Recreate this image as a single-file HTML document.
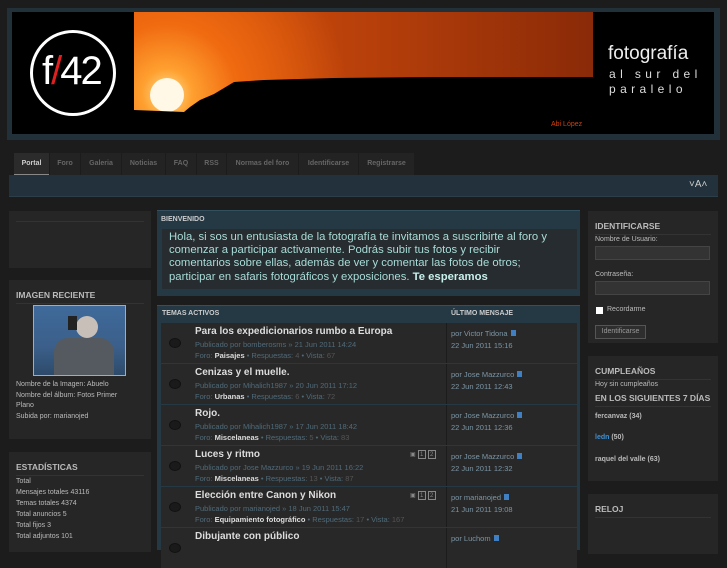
<!DOCTYPE html>
<html><head><meta charset="utf-8"><style>
*{margin:0;padding:0;box-sizing:border-box}
body{width:727px;height:545px;overflow:hidden;background:#1c1c1c;font-family:"Liberation Sans",sans-serif;color:#aaa;position:relative}
.a{position:absolute}
.box{position:absolute;background:#262626}
.bh{position:absolute;left:7px;right:7px;top:10px;height:14px;border-bottom:1px solid #333;font-size:8.5px;font-weight:bold;color:#bbb}
.tab{position:absolute;top:153px;height:22px;background:#232323;color:#666;font-size:7px;font-weight:bold;line-height:22px;text-align:center}
.sm{font-size:7px;color:#bbb;line-height:10.5px}
.row{position:absolute;left:161px;width:416px;height:40px;background:#282828}
.row .l{position:absolute;left:0;top:0;width:286px;height:40px;border-right:1px solid #1c1c1c}
.row .t{position:absolute;left:34px;top:3px;font-size:10px;font-weight:bold;color:#ddd}
.row .p{position:absolute;left:34px;top:17px;font-size:7.5px;color:#4f6b7a}
.row .f{position:absolute;left:34px;top:28px;font-size:7.5px;color:#4f6b7a}
.row .f b{color:#ddd}.row .f i{font-style:normal;color:#555}
.row .c{position:absolute;left:8px;top:15px;width:12px;height:10px;border-radius:50%;background:#1a1a1a;border:1px solid #111}
.row .r{position:absolute;left:290px;top:5px;font-size:7.5px;color:#7b96a6;line-height:11.5px}
.ic{display:inline-block;width:5px;height:6px;background:#3f7fc2;margin-left:3px}
.pg{position:absolute;top:4px;font-size:6px;color:#888}
.pg span{display:inline-block;width:8px;height:9px;border:1px solid #888;text-align:center;line-height:8px;margin-left:2px}
</style></head><body>
<div class="a" style="left:7px;top:8px;width:713px;height:132px;background:#22303a"></div>
<div class="a" style="left:12px;top:12px;width:702px;height:122px;background:#000"></div>
<div class="a" style="left:134px;top:12px;width:459px;height:121px;background:linear-gradient(90deg,#d5520c 0%,#b8400a 50%,#8a2a08 100%);overflow:hidden">
<div class="a" style="left:0;top:0;width:459px;height:121px;background:radial-gradient(circle at 33px 82px,#ffe090 0,#ffa030 25px,#f06a10 70px,rgba(220,80,10,0) 180px)"></div>
<div class="a" style="left:16px;top:66px;width:34px;height:34px;border-radius:50%;background:#fff8e6"></div>
<svg class="a" style="left:0;top:0" width="459" height="121"><path d="M0 98 L50 100 L56 95 L66 88 L80 82 L100 70 L130 68 L200 66 L300 65 L459 65 L459 121 L0 121Z" fill="#000"/></svg>
<div class="a" style="left:417px;top:109px;font-size:7px;color:#d0400a">Abi López</div>
</div>
<div class="a" style="left:30px;top:30px;width:86px;height:86px;border:3px solid #fff;border-radius:50%"></div>
<div class="a" style="left:42px;top:50px;font-size:40px;color:#fff;letter-spacing:-2px;font-family:'Liberation Sans Narrow','Liberation Sans',sans-serif;line-height:42px">f<span style="color:#e02020">/</span>42</div>
<div class="a" style="left:608px;top:44px;font-size:19px;color:#eee;line-height:20px">fotografía</div>
<div class="a" style="left:609px;top:67px;font-size:12px;color:#ddd;letter-spacing:4.4px;line-height:15px">al sur del<br>paralelo</div>

<div class="tab" style="left:14px;width:35px;background:#2b2b2b;color:#ccc;border-bottom:1px solid #888">Portal</div>
<div class="tab" style="left:50px;width:30px">Foro</div>
<div class="tab" style="left:81px;width:40px">Galeria</div>
<div class="tab" style="left:122px;width:43px">Noticias</div>
<div class="tab" style="left:166px;width:30px">FAQ</div>
<div class="tab" style="left:197px;width:29px">RSS</div>
<div class="tab" style="left:227px;width:71px">Normas del foro</div>
<div class="tab" style="left:299px;width:59px">Identificarse</div>
<div class="tab" style="left:359px;width:55px">Registrarse</div>
<div class="a" style="left:9px;top:175px;width:709px;height:22px;background:#22313b;border-bottom:1px solid #2c3e48"></div>
<div class="a" style="left:689px;top:179px;font-size:10px;color:#ccc">˅A˄</div>

<div class="box" style="left:9px;top:211px;width:142px;height:57px"><div class="a" style="left:7px;top:10px;width:128px;border-bottom:1px solid #333"></div></div>
<div class="box" style="left:9px;top:280px;width:142px;height:159px">
<div class="bh">IMAGEN RECIENTE</div>
<div class="a" style="left:24px;top:25px;width:93px;height:71px;background:#aaa;padding:1px"><div style="width:91px;height:69px;background:linear-gradient(180deg,#3f6a9a,#3b5f8a 60%,#2d4a6a);position:relative">
<div class="a" style="left:42px;top:10px;width:22px;height:22px;border-radius:50%;background:#c8c0b8"></div>
<div class="a" style="left:20px;top:32px;width:60px;height:37px;background:#555a60;border-radius:14px 14px 0 0"></div>
<div class="a" style="left:34px;top:10px;width:9px;height:14px;background:#222"></div></div></div>
<div class="a sm" style="left:7px;top:100px">Nombre de la Imagen: Abuelo<br>Nombre del álbum: Fotos Primer<br>Plano<br>Subida por: marianojed</div>
</div>
<div class="box" style="left:9px;top:452px;width:142px;height:100px">
<div class="bh">ESTADÍSTICAS</div>
<div class="a sm" style="left:7px;top:24px;line-height:11px">Total<br>Mensajes totales 43116<br>Temas totales 4374<br>Total anuncios 5<br>Total fijos 3<br>Total adjuntos 101</div>
</div>

<div class="a" style="left:157px;top:210px;width:423px;height:86px;background:#253945;border-top:1px solid #34505e"></div>
<div class="a" style="left:161px;top:216px;font-size:7px;font-weight:bold;color:#ccc">BIENVENIDO</div>
<div class="a" style="left:162px;top:229px;width:415px;height:60px;background:#262c2f"></div>
<div class="a" style="left:169px;top:231px;font-size:11.3px;color:#a8dcd8;line-height:13.2px;width:410px;white-space:nowrap">Hola, si sos un entusiasta de la fotografía te invitamos a suscribirte al foro y<br>comenzar a participar activamente. Podrás subir tus fotos y recibir<br>comentarios sobre ellas, además de ver y comentar las fotos de otros;<br>participar en safaris fotográficos y exposiciones. <b style="color:#c8f0ec">Te esperamos</b></div>

<div class="a" style="left:157px;top:305px;width:423px;height:245px;background:#253945;border-top:1px solid #34505e"></div>
<div class="a" style="left:162px;top:310px;font-size:7px;font-weight:bold;color:#ccc">TEMAS ACTIVOS</div>
<div class="a" style="left:451px;top:310px;font-size:7px;font-weight:bold;color:#ccc">ÚLTIMO MENSAJE</div>

<div class="row" style="top:323px"><div class="l"><div class="c"></div><div class="t">Para los expedicionarios rumbo a Europa</div><div class="p">Publicado por bomberosms » 21 Jun 2011 14:24</div><div class="f">Foro: <b>Paisajes</b> • Respuestas: <i>4</i> • Vista: <i>67</i></div></div><div class="r">por Victor Tidona<span class="ic"></span><br>22 Jun 2011 15:16</div></div>
<div class="row" style="top:364px"><div class="l"><div class="c"></div><div class="t">Cenizas y el muelle.</div><div class="p">Publicado por Mihalich1987 » 20 Jun 2011 17:12</div><div class="f">Foro: <b>Urbanas</b> • Respuestas: <i>6</i> • Vista: <i>72</i></div></div><div class="r">por Jose Mazzurco<span class="ic"></span><br>22 Jun 2011 12:43</div></div>
<div class="row" style="top:405px"><div class="l"><div class="c"></div><div class="t">Rojo.</div><div class="p">Publicado por Mihalich1987 » 17 Jun 2011 18:42</div><div class="f">Foro: <b>Miscelaneas</b> • Respuestas: <i>5</i> • Vista: <i>83</i></div></div><div class="r">por Jose Mazzurco<span class="ic"></span><br>22 Jun 2011 12:36</div></div>
<div class="row" style="top:446px"><div class="l"><div class="c"></div><div class="t">Luces y ritmo</div><div class="pg" style="left:249px">▣<span>1</span><span>2</span></div><div class="p">Publicado por Jose Mazzurco » 19 Jun 2011 16:22</div><div class="f">Foro: <b>Miscelaneas</b> • Respuestas: <i>13</i> • Vista: <i>87</i></div></div><div class="r">por Jose Mazzurco<span class="ic"></span><br>22 Jun 2011 12:32</div></div>
<div class="row" style="top:487px"><div class="l"><div class="c"></div><div class="t">Elección entre Canon y Nikon</div><div class="pg" style="left:249px">▣<span>1</span><span>2</span></div><div class="p">Publicado por marianojed » 18 Jun 2011 15:47</div><div class="f">Foro: <b>Equipamiento fotográfico</b> • Respuestas: <i>17</i> • Vista: <i>167</i></div></div><div class="r">por marianojed<span class="ic"></span><br>21 Jun 2011 19:08</div></div>
<div class="row" style="top:528px"><div class="l"><div class="c"></div><div class="t">Dibujante con público</div></div><div class="r">por Luchom<span class="ic"></span></div></div>

<div class="box" style="left:588px;top:211px;width:130px;height:132px">
<div class="bh">IDENTIFICARSE</div>
<div class="a" style="left:7px;top:25px;font-size:7px;color:#bbb">Nombre de Usuario:</div>
<div class="a" style="left:7px;top:35px;width:115px;height:14px;background:#333;border:1px solid #444"></div>
<div class="a" style="left:7px;top:60px;font-size:7px;color:#bbb">Contraseña:</div>
<div class="a" style="left:7px;top:70px;width:115px;height:14px;background:#333;border:1px solid #444"></div>
<div class="a" style="left:8px;top:96px;width:7px;height:7px;background:#fff"></div>
<div class="a" style="left:19px;top:95px;font-size:7px;color:#bbb">Recordarme</div>
<div class="a" style="left:7px;top:114px;width:51px;height:14px;border:1px solid #555;background:#2e2e2e;font-size:7px;color:#999;text-align:center;line-height:12px">Identificarse</div>
</div>
<div class="box" style="left:588px;top:356px;width:130px;height:125px">
<div class="bh">CUMPLEAÑOS</div>
<div class="a" style="left:7px;top:25px;font-size:7px;color:#bbb">Hoy sin cumpleaños</div>
<div class="a" style="left:7px;top:37px;width:116px;height:14px;border-bottom:1px solid #333;font-size:8.5px;font-weight:bold;color:#bbb">EN LOS SIGUIENTES 7 DÍAS</div>
<div class="a" style="left:7px;top:57px;font-size:7px;font-weight:bold;color:#bbb">fercanvaz (34)</div>
<div class="a" style="left:7px;top:78px;font-size:7px;font-weight:bold;color:#bbb"><span style="color:#3f8fd0">ledn</span> (50)</div>
<div class="a" style="left:7px;top:100px;font-size:7px;font-weight:bold;color:#bbb">raquel del valle (63)</div>
</div>
<div class="box" style="left:588px;top:494px;width:130px;height:60px"><div class="bh">RELOJ</div></div>
</body></html>
